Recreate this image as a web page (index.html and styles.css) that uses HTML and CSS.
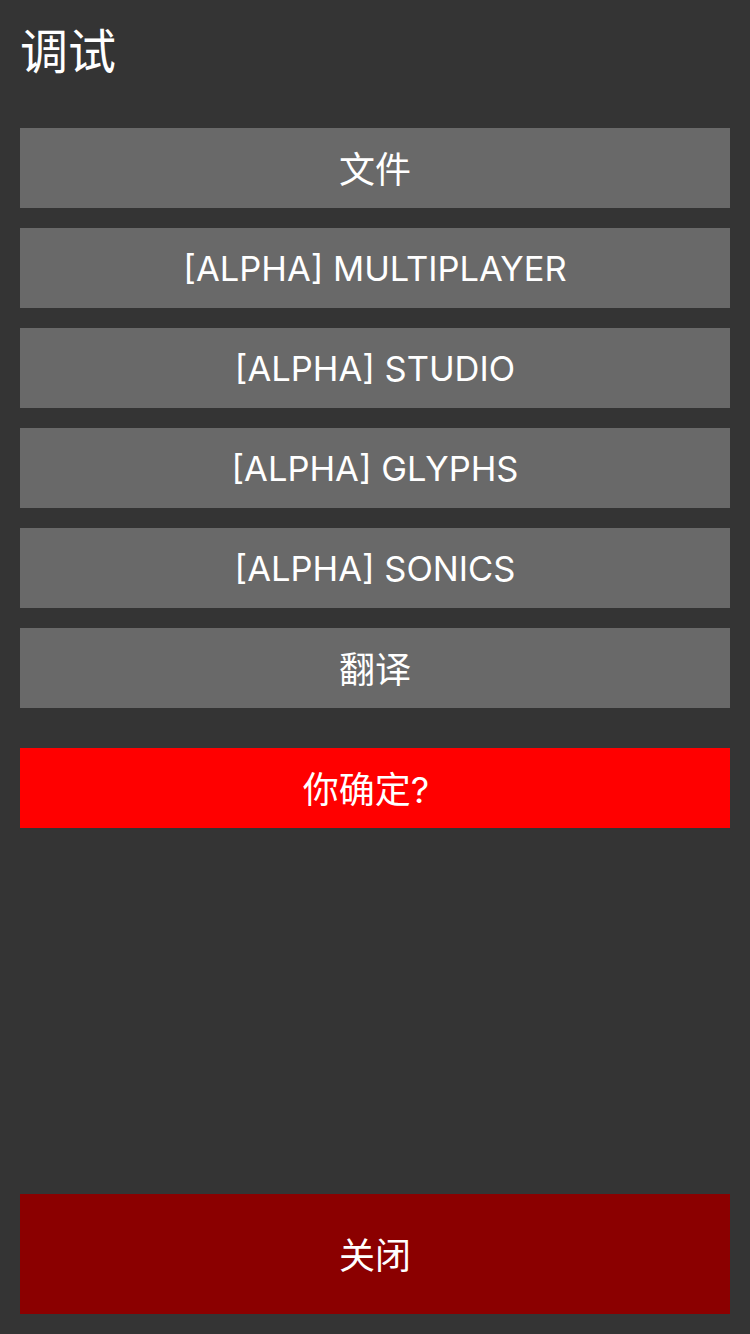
FILE: index.html
```html
<!DOCTYPE html>
<html lang="zh">
<head>
<meta charset="utf-8">
<link rel="stylesheet" href="styles.css">
</head>
<body>
<div class="screen">
  <h1 class="title">调试</h1>
  <div class="menu">
    <div class="btn btn-cjk">文件</div>
    <div class="btn">[ALPHA] MULTIPLAYER</div>
    <div class="btn">[ALPHA] STUDIO</div>
    <div class="btn">[ALPHA] GLYPHS</div>
    <div class="btn">[ALPHA] SONICS</div>
    <div class="btn btn-cjk">翻译</div>
  </div>
  <div class="btn btn-cjk btn-danger">你确定?</div>
  <div class="btn btn-cjk btn-close">关闭</div>
</div>
</body>
</html>
```
FILE: styles.css
```css
html, body {
  margin: 0;
  padding: 0;
  background: #343434;
}
.screen {
  box-sizing: border-box;
  width: 750px;
  height: 1334px;
  padding: 20px;
  display: flex;
  flex-direction: column;
  font-family: Inter, "Noto Sans CJK SC", sans-serif;
  color: #ffffff;
}
.title {
  margin: 0 0 52px 0;
  height: 56px;
  line-height: 56px;
  font-size: 48px;
  font-weight: 400;
  font-family: "Noto Sans CJK SC", sans-serif;
}
.menu {
  display: flex;
  flex-direction: column;
  gap: 20px;
}
.btn {
  height: 80px;
  background: #696969;
  display: flex;
  align-items: center;
  justify-content: center;
  font-size: 34.5px;
}
.btn-cjk {
  font-family: Inter, "Noto Sans CJK SC", sans-serif;
  font-size: 36px;
  padding-bottom: 3px;
  box-sizing: border-box;
}
.btn-danger {
  margin-top: 40px;
  padding-right: 18px;
  background: #ff0000;
}
.btn-close {
  margin-top: auto;
  height: 120px;
  background: #8b0000;
}
```
